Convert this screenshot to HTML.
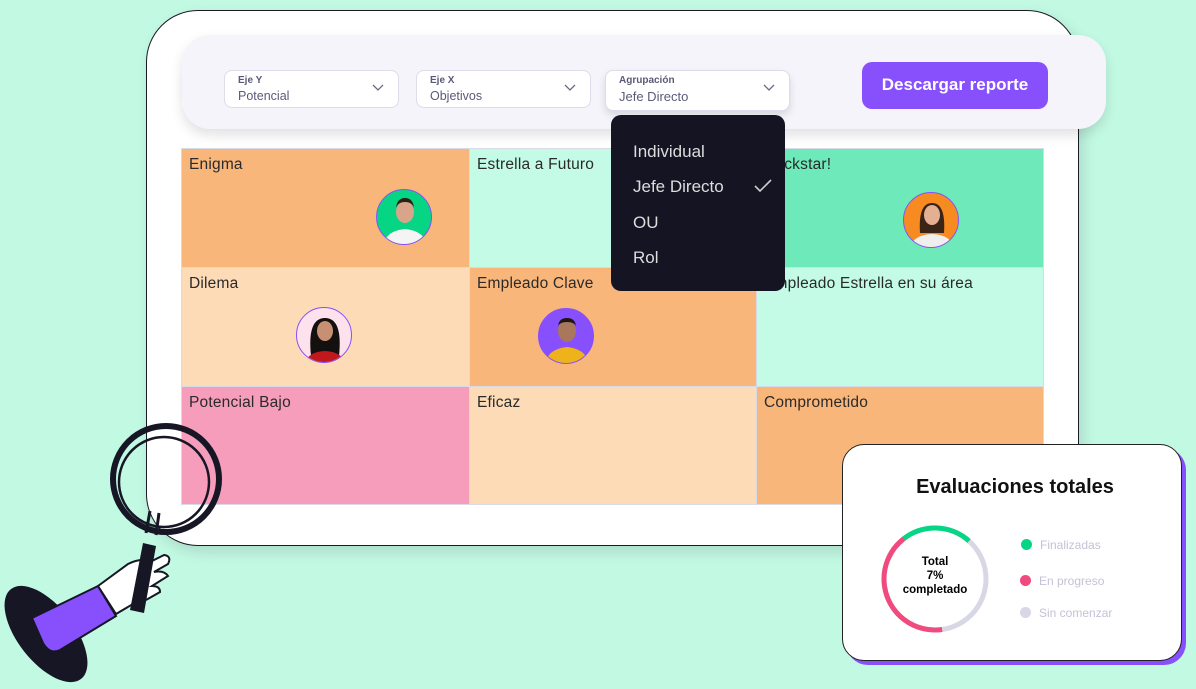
<!DOCTYPE html>
<html><head><meta charset="utf-8"><style>
*{margin:0;padding:0;box-sizing:border-box}
body{width:1196px;height:689px;background:#c2f9e3;position:relative;overflow:hidden;font-family:"Liberation Sans",sans-serif;color:#222}
.tablet{position:absolute;left:146px;top:10px;width:933px;height:536px;background:#fff;border:1.5px solid #1a1a24;border-radius:52px;box-shadow:4px 6px 14px rgba(0,0,0,.12)}
.bar{position:absolute;left:182px;top:35px;width:924px;height:94px;background:#f4f4fa;border-radius:28px;box-shadow:0 6px 12px rgba(0,0,0,.12)}
.sel{position:absolute;top:70px;height:38px;background:#fff;border:1.5px solid #dcdcea;border-radius:8px}
.sel .l{position:absolute;left:13px;top:4px;font-size:10px;font-weight:bold;color:#5a5a78}
.sel .v{position:absolute;left:13px;top:18px;font-size:12.5px;color:#5a5a78}
.sel svg{position:absolute;right:14px;top:13px}
.btn{position:absolute;left:862px;top:62px;width:186px;height:47px;background:#8750fc;border-radius:10px;color:#fff;font-weight:bold;font-size:17px;text-align:center;line-height:46px}
.cell{position:absolute;border:1px solid #d8dbe6;font-size:15.5px;letter-spacing:.2px;padding:7px 7px;color:#2a2a2a}
.av{position:absolute;width:56px;height:56px;border-radius:50%;border:1.5px solid #8750fc;overflow:hidden}
.dd{position:absolute;left:611px;top:115px;width:174px;height:176px;background:#151423;border-radius:10px;color:#ddd;font-size:17px}
.dd div{position:absolute;left:22px}
.card{position:absolute;left:842px;top:444px;width:340px;height:217px;background:#fff;border:1px solid #222;border-radius:22px;box-shadow:4px 4px 0 #8750fc}
.card h3{position:absolute;top:31px;width:100%;text-align:center;font-size:20px;color:#111;padding-left:6px}
.lg{position:absolute;left:178px;font-size:12px;color:#c4c2d6}
.lg i{position:absolute;left:-19px;top:1px;width:11px;height:11px;border-radius:50%}
</style></head><body>
<div class="tablet"></div>
<div class="cell" style="left:181px;top:148px;width:289px;height:120px;background:#f9b67a">Enigma</div>
<div class="cell" style="left:469px;top:148px;width:288px;height:120px;background:#c3fbe6">Estrella a Futuro</div>
<div class="cell" style="left:756px;top:148px;width:288px;height:120px;background:#6ee9b9">Rockstar!</div>
<div class="cell" style="left:181px;top:267px;width:289px;height:120px;background:#fcdbb6">Dilema</div>
<div class="cell" style="left:469px;top:267px;width:288px;height:120px;background:#f9b67a">Empleado Clave</div>
<div class="cell" style="left:756px;top:267px;width:288px;height:120px;background:#c3fbe6">Empleado Estrella en su área</div>
<div class="cell" style="left:181px;top:386px;width:289px;height:119px;background:#f59dbb">Potencial Bajo</div>
<div class="cell" style="left:469px;top:386px;width:288px;height:119px;background:#fcdbb6">Eficaz</div>
<div class="cell" style="left:756px;top:386px;width:288px;height:119px;background:#f9b67a">Comprometido</div>
<div class="av" style="left:376px;top:189px;background:#06d684"><svg width="56" height="56"><ellipse cx="28" cy="22" rx="9" ry="11" fill="#d9a58a"/><path d="M19 18q1-10 9-10t9 10q-2-6-9-6t-9 6z" fill="#2b2018"/><path d="M6 56q2-15 22-17 20 2 22 17z" fill="#f4f4f4"/></svg></div>
<div class="av" style="left:903px;top:192px;background:#f88a22"><svg width="56" height="56"><path d="M16 40q-2-30 12-30t12 30z" fill="#3a2418"/><ellipse cx="28" cy="22" rx="8" ry="10" fill="#e3b094"/><path d="M6 56q2-14 22-15 20 1 22 15z" fill="#efefef"/></svg></div>
<div class="av" style="left:296px;top:307px;background:#fde1ec"><svg width="56" height="56"><path d="M14 48q-4-38 14-38t14 38z" fill="#151010"/><ellipse cx="28" cy="23" rx="8" ry="10" fill="#c89072"/><path d="M8 56q2-12 20-13 18 1 20 13z" fill="#c1181e"/></svg></div>
<div class="av" style="left:538px;top:308px;background:#8750fc"><svg width="56" height="56"><ellipse cx="28" cy="22" rx="9" ry="11" fill="#a8775c"/><path d="M19 17q1-8 9-8t9 8q-2-4-9-4t-9 4z" fill="#1d1612"/><path d="M6 56q2-16 22-18 20 2 22 18z" fill="#eeb21a"/></svg></div>
<div class="bar"></div>
<div class="sel" style="left:224px;width:175px"><div class="l">Eje Y</div><div class="v">Potencial</div><svg width="12" height="8"><path d="M1 1l5 5 5-5" stroke="#6a6a80" stroke-width="1.3" fill="none"/></svg></div>
<div class="sel" style="left:416px;width:175px"><div class="l">Eje X</div><div class="v">Objetivos</div><svg width="12" height="8"><path d="M1 1l5 5 5-5" stroke="#6a6a80" stroke-width="1.3" fill="none"/></svg></div>
<div class="sel" style="left:605px;width:185px;height:41px;box-shadow:0 4px 8px rgba(0,0,0,.12)"><div class="l">Agrupación</div><div class="v" style="font-size:13px">Jefe Directo</div><svg width="12" height="8"><path d="M1 1l5 5 5-5" stroke="#6a6a80" stroke-width="1.3" fill="none"/></svg></div>
<div class="btn">Descargar reporte</div>
<div class="dd"><div style="top:27px">Individual</div><div style="top:62px">Jefe Directo</div><div style="top:98px">OU</div><div style="top:133px">Rol</div>
<svg style="position:absolute;left:143px;top:64px" width="18" height="14"><path d="M1 7l5 5 11-11" stroke="#ccc" stroke-width="1.6" fill="none"/></svg></div>
<div class="card"><h3>Evaluaciones totales</h3>
<svg style="position:absolute;left:36px;top:78px" width="112" height="112" viewBox="0 0 112 112">
<g fill="none" stroke-width="5">
<circle cx="56" cy="56" r="51" stroke="#d7d7e6"/>
<circle cx="56" cy="56" r="51" stroke="#f04a7e" stroke-dasharray="134 400" transform="rotate(82 56 56)"/>
<circle cx="56" cy="56" r="51" stroke="#06d684" stroke-dasharray="71 400" transform="rotate(232 56 56)"/>
</g>
<text x="56" y="42" text-anchor="middle" font-size="11.5" font-weight="bold" font-family="Liberation Sans">Total</text>
<text x="56" y="56" text-anchor="middle" font-size="11.5" font-weight="bold" font-family="Liberation Sans">7%</text>
<text x="56" y="70" text-anchor="middle" font-size="11.5" font-weight="bold" font-family="Liberation Sans">completado</text>
</svg>
<div class="lg" style="top:93px;left:197px"><i style="background:#06d684"></i>Finalizadas</div>
<div class="lg" style="top:129px;left:196px"><i style="background:#f04a7e"></i>En progreso</div>
<div class="lg" style="top:161px;left:196px"><i style="background:#d7d7e6"></i>Sin comenzar</div>
</div>
<svg style="position:absolute;left:0;top:420px" width="260" height="269">
<ellipse cx="46" cy="214" rx="28" ry="57" transform="rotate(-38 46 214)" fill="#161625"/>
<path d="M32 198l66-32 18 30-56 34q-10 5-17-7z" fill="#8750fc" stroke="#161625" stroke-width="2"/>
<path d="M98 166l30-22q12-6 20-3l-10 40-22 13z" fill="#fff" stroke="#161625" stroke-width="2"/>
<path d="M148 143l16-8q8 1 4 9l-14 8q10-2 14 4l-16 10q8 0 8 6l-14 8" fill="#fff" stroke="#161625" stroke-width="2"/>
<path d="M143 123l13 3-12 67-14-3z" fill="#161625"/>
<path d="M146 113l4-22M156 115l3-22" stroke="#161625" stroke-width="3"/>
<circle cx="166" cy="59" r="53" fill="none" stroke="#161625" stroke-width="6"/>
<circle cx="164" cy="62" r="45" fill="none" stroke="#161625" stroke-width="2.5"/>
</svg>
</body></html>
